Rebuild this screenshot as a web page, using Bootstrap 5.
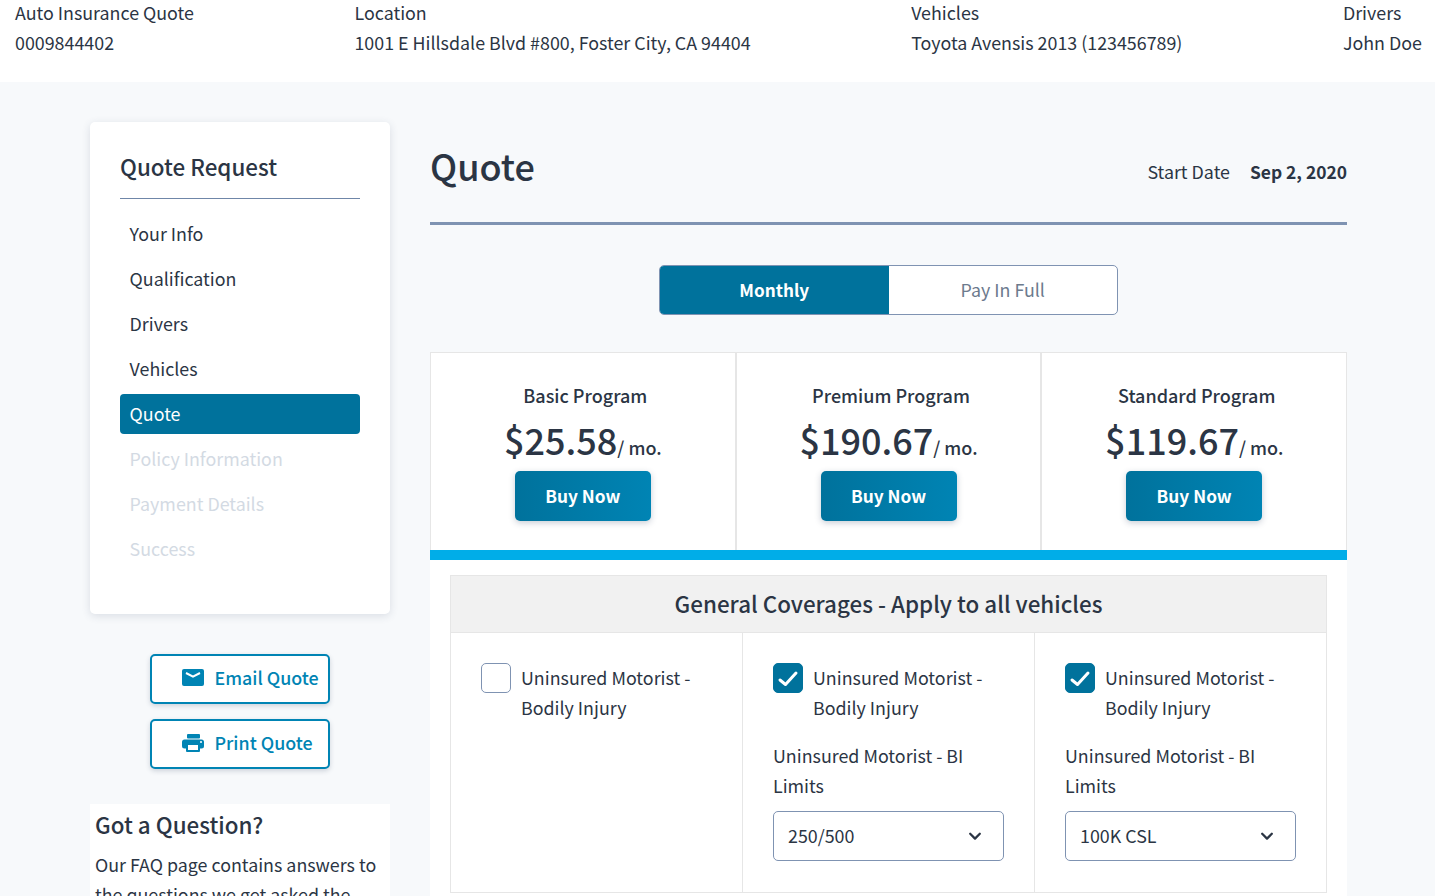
<!DOCTYPE html>
<html lang="en">
<head>
  <meta charset="UTF-8">
  <meta name="viewport" content="width=device-width, initial-scale=1.0">
  <title>Quote</title>
  <link href="https://cdn.jsdelivr.net/npm/bootstrap@5.3.0/dist/css/bootstrap.min.css" rel="stylesheet">
  <style>
    html, body { height: 896px; overflow: hidden; }
    body { background: #f7f9fb; color: #2b3544; font-family: "Noto Sans CJK SC", "Noto Sans", sans-serif; font-size: 17.85px; line-height: 30px; }
    .top-info { background: #fff; height: 82px; padding: 0 13px 0 15px; }
    .top-info > div { margin-top: -3px; }
    .page-wrap { padding: 40px 88px 0 90px; gap: 40px; }
    .side-col { width: 300px; flex: none; }
    .side-card { background: #fff; border-radius: 5px; height: 492px; padding: 30px; box-shadow: 0 2px 8px rgba(40, 60, 90, .14); }
    .side-title { font-size: 22.4px; font-weight: 500; line-height: 32px; margin-top: -2px; padding-bottom: 16px; border-bottom: 1px solid #6f86a8; margin-bottom: 15px; }
    .side-link { display: block; height: 40px; line-height: 38px; margin-bottom: 5px; padding-left: 9.6px; border-radius: 4px; color: #2b3544; text-decoration: none; }
    .side-link.current { background: #00729c; color: #fff; }
    .side-link.off { color: #d3dae3; }
    .side-actions { margin-top: 40px; row-gap: 15px; }
    .outline-act { width: 180px; height: 50px; border: 2px solid #0084b4; border-radius: 5px; background: #fff; color: #0084b4; font-weight: 500; font-size: 17.85px; line-height: 26px; padding: 0 0 3px 29.5px; gap: 11px; box-shadow: 0 2px 5px rgba(40, 60, 90, .2); }
    .outline-act:hover { background: #fff; color: #0084b4; border-color: #0084b4; }
    .act-text { margin-bottom: 2px; }
    .faq-box { background: #fff; margin-top: 35px; padding: 5px; height: 100px; }
    .faq-box h5 { font-size: 22.4px; font-weight: 500; line-height: 30px; margin: 0 0 10px; }
    .main-col { width: 917px; flex: none; }
    .quote-head { height: 103px; border-bottom: 3px solid #7f93b2; padding-bottom: 15px; }
    .quote-head h1 { font-size: 36px; font-weight: 500; line-height: 50px; margin: 0; }
    .start-line { gap: 20px; padding-top: 13px; }
    .start-line b { font-weight: 600; font-size: 17.4px; padding-top: 1px; }
    .plan-toggle { width: 459px; height: 50px; margin: 40px auto 37px; border: 1px solid #7f93b2; border-radius: 5px; overflow: hidden; background: #fff; }
    .plan-toggle span { width: 50%; text-align: center; line-height: 47px; color: #6c7a8d; }
    .plan-toggle .chosen { background: #00729c; color: #fff; font-weight: 600; font-size: 17.2px; line-height: 48px; }
    .price-row { background: #fff; border: 1px solid #e6e6e6; border-bottom: 0; height: 198px; }
    .price-cell { flex: 1; text-align: center; padding-top: 27px; }
    .price-cell + .price-cell { border-left: 2px solid #e6e6e6; }
    .price-name { font-size: 18px; line-height: 30px; font-weight: 500; padding-left: 5px; }
    .price-num { font-size: 36px; font-weight: 500; line-height: 50px; height: 50px; margin-top: 4px; }
    .price-num small { font-size: 18px; font-weight: 500; }
    .buy-btn { width: 136px; height: 50px; background: linear-gradient(90deg, #00729c, #0084b4); border: 0; border-radius: 5px; color: #fff; font-weight: 600; font-size: 17.3px; margin-top: 7px; box-shadow: 0 2px 6px rgba(40, 60, 90, .25); }
    .blue-rule { height: 10px; background: #00ade8; }
    .cover-panel { background: #fff; padding: 15px 20px 0; height: 400px; }
    .cover-table { border: 1px solid #e6e6e6; border-bottom: 0; }
    .cover-head { background: #f1f1f1; height: 57px; line-height: 55px; text-align: center; font-size: 22.4px; font-weight: 500; border-bottom: 1px solid #e6e6e6; }
    .cover-cell { flex: 1; height: 260px; padding: 30px; border-bottom: 1px solid #e6e6e6; }
    .cover-cell + .cover-cell { border-left: 1px solid #e6e6e6; }
    .check-line { column-gap: 10px; }
    .check-line > div { margin-top: -1px; }
    .cover-cell .form-check-input { width: 30px; height: 30px; margin: 0; flex: none; border: 1px solid #7f93b2; border-radius: 5px; }
    .cover-cell .form-check-input:checked { border-color: #00729c; background-color: #00729c; background-size: 30px 30px; background-image: url("data:image/svg+xml,%3csvg xmlns='http://www.w3.org/2000/svg' viewBox='0 0 30 30'%3e%3cpath fill='none' stroke='%23fff' stroke-width='3' stroke-linecap='round' stroke-linejoin='round' d='M7 17l5.5 4.5L23 10'/%3e%3c/svg%3e"); }
    .limit-label { margin-top: 18px; margin-bottom: 11px; }
    .cover-cell .form-select { height: 50px; border: 1px solid #7f93b2; border-radius: 5px; font-size: 17.85px; color: #2b3544; padding: 0 14px 2px; background-position: right 21px center; background-size: 14px 14px; background-image: url("data:image/svg+xml,%3csvg xmlns='http://www.w3.org/2000/svg' viewBox='0 0 16 16'%3e%3cpath fill='none' stroke='%232b3544' stroke-width='2.6' stroke-linecap='round' stroke-linejoin='round' d='M2.5 5.5L8 11l5.5-5.5'/%3e%3c/svg%3e"); }
  </style>
</head>
<body>
  <!-- top summary -->
  <div class="top-info d-flex justify-content-between">
    <div><div>Auto Insurance Quote</div><div>0009844402</div></div>
    <div><div>Location</div><div>1001 E Hillsdale Blvd #800, Foster City, CA 94404</div></div>
    <div><div>Vehicles</div><div>Toyota Avensis 2013 (123456789)</div></div>
    <div><div>Drivers</div><div>John Doe</div></div>
  </div>

  <div class="page-wrap d-flex">
    <!-- sidebar -->
    <div class="side-col">
      <div class="side-card">
        <div class="side-title">Quote Request</div>
        <a class="side-link" href="#">Your Info</a>
        <a class="side-link" href="#">Qualification</a>
        <a class="side-link" href="#">Drivers</a>
        <a class="side-link" href="#">Vehicles</a>
        <a class="side-link current" href="#">Quote</a>
        <a class="side-link off" href="#">Policy Information</a>
        <a class="side-link off" href="#">Payment Details</a>
        <a class="side-link off" href="#">Success</a>
      </div>
      <div class="side-actions d-flex flex-column align-items-center">
        <button class="btn outline-act d-flex align-items-center" type="button">
          <svg width="22" height="17" viewBox="0 0 22 17"><rect width="22" height="17" rx="2" fill="#0084b4"/><path fill="none" stroke="#fff" stroke-width="2" d="M4 4l7 3.6L18 4"/></svg>
          <span class="act-text">Email Quote</span>
        </button>
        <button class="btn outline-act d-flex align-items-center" type="button">
          <svg width="22" height="18" viewBox="0 0 22 18"><rect x="5" width="13" height="4.5" rx="1" fill="#0084b4"/><rect y="5.5" width="22" height="9" rx="2.5" fill="#0084b4"/><rect x="4" y="9" width="14" height="9" rx="1" fill="#0084b4"/><rect x="6" y="11" width="10" height="5" fill="#fff"/><circle cx="19" cy="8" r="1" fill="#fff"/></svg>
          <span class="act-text">Print Quote</span>
        </button>
      </div>
      <div class="faq-box">
        <h5>Got a Question?</h5>
        <div>Our FAQ page contains answers to the questions we get asked the most often.</div>
      </div>
    </div>

    <!-- main -->
    <div class="main-col">
      <div class="quote-head d-flex justify-content-between align-items-center">
        <h1>Quote</h1>
        <div class="start-line d-flex"><span>Start Date</span><b>Sep 2, 2020</b></div>
      </div>

      <div class="plan-toggle d-flex">
        <span class="chosen">Monthly</span>
        <span>Pay In Full</span>
      </div>

      <div class="price-row d-flex">
        <div class="price-cell">
          <div class="price-name">Basic Program</div>
          <div class="price-num">$25.58<small>/ mo.</small></div>
          <button class="btn buy-btn" type="button">Buy Now</button>
        </div>
        <div class="price-cell">
          <div class="price-name">Premium Program</div>
          <div class="price-num">$190.67<small>/ mo.</small></div>
          <button class="btn buy-btn" type="button">Buy Now</button>
        </div>
        <div class="price-cell">
          <div class="price-name">Standard Program</div>
          <div class="price-num">$119.67<small>/ mo.</small></div>
          <button class="btn buy-btn" type="button">Buy Now</button>
        </div>
      </div>
      <div class="blue-rule"></div>

      <div class="cover-panel">
        <div class="cover-table">
          <div class="cover-head">General Coverages - Apply to all vehicles</div>
          <div class="d-flex">
            <div class="cover-cell">
              <div class="check-line d-flex">
                <input class="form-check-input" type="checkbox">
                <div>Uninsured Motorist - Bodily Injury</div>
              </div>
            </div>
            <div class="cover-cell">
              <div class="check-line d-flex">
                <input class="form-check-input" type="checkbox" checked>
                <div>Uninsured Motorist - Bodily Injury</div>
              </div>
              <div class="limit-label">Uninsured Motorist - BI Limits</div>
              <select class="form-select"><option>250/500</option></select>
            </div>
            <div class="cover-cell">
              <div class="check-line d-flex">
                <input class="form-check-input" type="checkbox" checked>
                <div>Uninsured Motorist - Bodily Injury</div>
              </div>
              <div class="limit-label">Uninsured Motorist - BI Limits</div>
              <select class="form-select"><option>100K CSL</option></select>
            </div>
          </div>
        </div>
      </div>
    </div>
  </div>

  <script src="https://cdn.jsdelivr.net/npm/bootstrap@5.3.0/dist/js/bootstrap.bundle.min.js"></script>
</body>
</html>
